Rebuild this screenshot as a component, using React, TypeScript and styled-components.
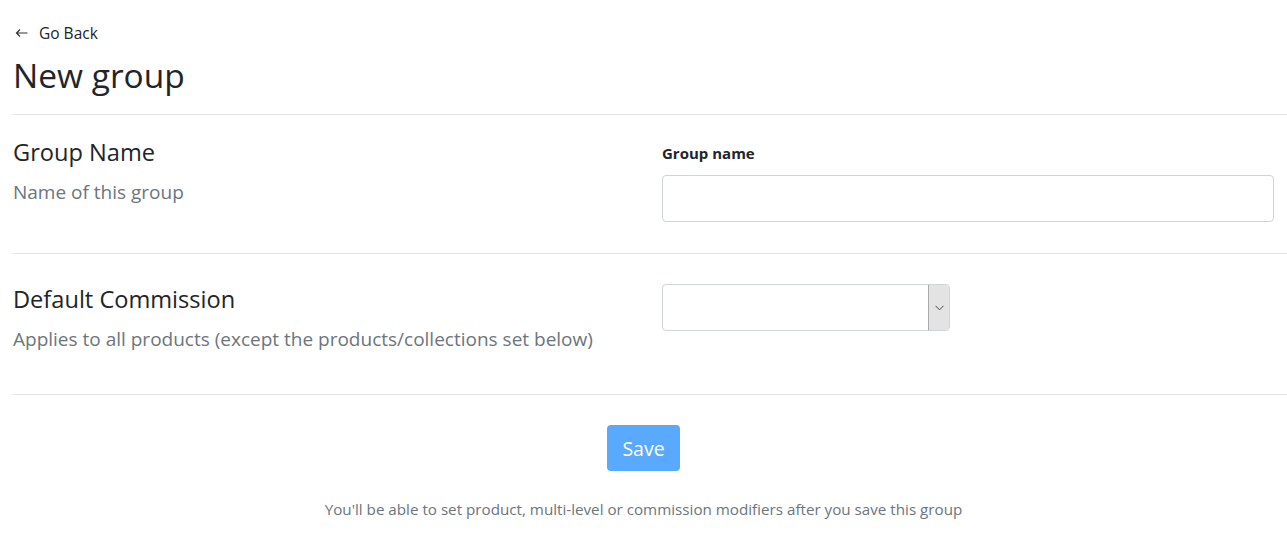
import React, { useState } from 'react'
import styled, { createGlobalStyle } from 'styled-components'

const GlobalStyle = createGlobalStyle`
  body {
    margin: 0;
    background: #fff;
    font-family: "Open Sans", "Noto Sans", Arial, sans-serif;
    color: #212529;
  }
`

const Page = styled.div`
  padding-left: 13px;
`

const Header = styled.div`
  padding-top: 21px;
  padding-bottom: 17px;
  border-bottom: 1px solid #e2e2e2;
`

const BackLink = styled.a`
  display: inline-flex;
  align-items: center;
  gap: 11px;
  font-size: 15.5px;
  line-height: 22px;
  color: #212529;
  text-decoration: none;
  cursor: pointer;
  padding-left: 2px;
`

const Title = styled.h1`
  margin: 9px 0 0;
  font-size: 33.5px;
  font-weight: 400;
  line-height: 44px;
`

const Section = styled.div<{ $top: number; $bottom: number }>`
  display: grid;
  grid-template-columns: 1fr 1fr;
  column-gap: 37px;
  padding: ${(p) => p.$top}px 13px ${(p) => p.$bottom}px 0;
  border-bottom: 1px solid #e2e2e2;
`

const Heading = styled.h4`
  margin: 0;
  font-size: 23.6px;
  font-weight: 400;
  line-height: 30px;
`

const Hint = styled.p`
  margin: 12px 0 0;
  font-size: 19px;
  line-height: 26px;
  color: #6c757d;
`

const Label = styled.label`
  display: block;
  font-size: 15px;
  font-weight: 700;
  line-height: 20px;
  margin: 6px 0 12px;
`

const TextInput = styled.input`
  display: block;
  box-sizing: border-box;
  width: 100%;
  height: 47px;
  border: 1px solid #ced4da;
  border-radius: 4px;
  padding: 6px 12px;
  font-size: 16px;
  font-family: inherit;
  outline: none;
`

const SelectBox = styled.div`
  display: flex;
  box-sizing: border-box;
  width: 288px;
  height: 47px;
  border: 1px solid #ced4da;
  border-radius: 4px;
  overflow: hidden;
`

const SelectValue = styled.div`
  flex: 1;
`

const SelectArrow = styled.div`
  width: 20px;
  display: flex;
  align-items: center;
  justify-content: center;
  background: #e3e3e3;
  border-left: 1px solid #a9a9a9;
  color: #444;
`

const Footer = styled.div`
  display: flex;
  flex-direction: column;
  align-items: center;
  padding: 30px 13px 0 0;
`

const SaveButton = styled.button`
  height: 46px;
  padding: 0 15px;
  border: none;
  border-radius: 4px;
  background: #59a9ff;
  color: #fff;
  font-family: inherit;
  font-size: 19.5px;
  cursor: default;
`

const Note = styled.p`
  margin: 28px 0 0;
  font-size: 15.2px;
  line-height: 20px;
  color: #6c757d;
`

export default function App() {
  const [name, setName] = useState('')

  return (
    <>
      <GlobalStyle />
      <Page>
        <Header>
          <BackLink>
            <svg width="13" height="10" viewBox="0 0 13 10" fill="none" stroke="#333" strokeWidth="1.2">
              <path d="M12.5 5H1.5M5 1.5L1.5 5L5 8.5" />
            </svg>
            Go Back
          </BackLink>
          <Title>New group</Title>
        </Header>

        <Section $top={22} $bottom={31}>
          <div>
            <Heading>Group Name</Heading>
            <Hint>Name of this group</Hint>
          </div>
          <div>
            <Label>Group name</Label>
            <TextInput value={name} onChange={(e) => setName(e.target.value)} />
          </div>
        </Section>

        <Section $top={30} $bottom={42}>
          <div>
            <Heading>Default Commission</Heading>
            <Hint>Applies to all products (except the products/collections set below)</Hint>
          </div>
          <div>
            <SelectBox>
              <SelectValue />
              <SelectArrow>
                <svg width="9" height="6" viewBox="0 0 9 6" fill="none" stroke="currentColor" strokeWidth="1">
                  <path d="M0.5 0.8L4.5 4.8L8.5 0.8" />
                </svg>
              </SelectArrow>
            </SelectBox>
          </div>
        </Section>

        <Footer>
          <SaveButton disabled>Save</SaveButton>
          <Note>You'll be able to set product, multi-level or commission modifiers after you save this group</Note>
        </Footer>
      </Page>
    </>
  )
}
